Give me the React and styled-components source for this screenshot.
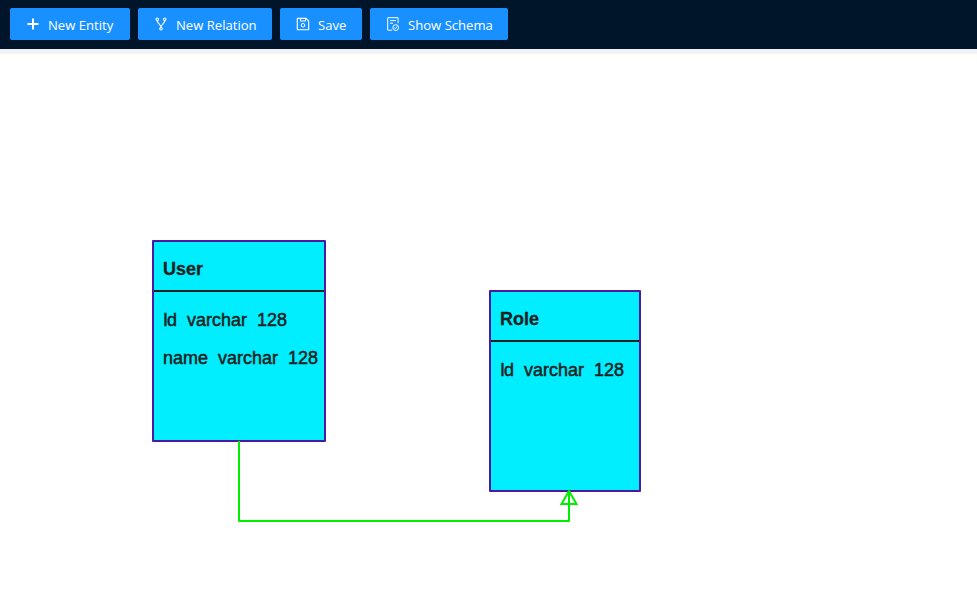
import React from "react";
import styled, { createGlobalStyle } from "styled-components";
import { AiOutlineFork, AiOutlineSave } from "react-icons/ai";

const GlobalStyle = createGlobalStyle`
  body {
    margin: 0;
    background: #ffffff;
    overflow: hidden;
  }
`;

const Page = styled.div`
  display: flex;
  flex-direction: column;
  height: 600px;
`;

const Toolbar = styled.header`
  display: flex;
  gap: 8px;
  box-sizing: border-box;
  height: 54px;
  padding: 8px 10px;
  background: #001529;
  border-bottom: 5px solid #f0f2f5;
`;

const ToolButton = styled.button`
  display: flex;
  align-items: center;
  gap: 7px;
  box-sizing: border-box;
  width: ${(p) => p.$width}px;
  height: 32px;
  padding: 0 0 0 15px;
  border: 0;
  border-radius: 2px;
  background: #1890ff;
  color: #ffffff;
  font: 13.1px/22px "Open Sans", sans-serif;
  white-space: nowrap;

  svg {
    flex: none;
    width: 16px;
    height: 16px;
  }
`;

const ButtonLabel = styled.span`
  padding-top: 2px;
`;

const Canvas = styled.main`
  position: relative;
  flex: 1;
  background: #ffffff;
`;

const Entity = styled.section`
  position: absolute;
  left: ${(p) => p.$x}px;
  top: ${(p) => p.$y}px;
  box-sizing: border-box;
  width: ${(p) => p.$width}px;
  height: 202px;
  border: 2px solid #4b1a9e;
  border-radius: 1px;
  background: #00eeff;
  color: #222222;
  font-family: "Liberation Sans", Arial, sans-serif;
  font-size: 18px;
  white-space: pre;
`;

const EntityName = styled.h2`
  box-sizing: border-box;
  height: 50px;
  margin: 0;
  padding: 6px 9px 0;
  border-bottom: 2px solid #222222;
  font-size: 18px;
  line-height: 43px;
  -webkit-text-stroke: 0.3px #222222;
`;

const FieldRow = styled.div`
  height: 38px;
  padding: 0 9px;
  line-height: 38px;
  -webkit-text-stroke: 0.5px #222222;

  &:first-child::first-letter {
    letter-spacing: -1px;
  }
`;

const FieldList = styled.div`
  padding-top: 9px;
`;

const RelationLayer = styled.svg`
  position: absolute;
  left: 0;
  top: 0;
`;

function PlusIcon() {
  return (
    <svg viewBox="0 0 16 16" fill="none" stroke="currentColor" strokeWidth="2">
      <path d="M8 2.5V13.5M2.5 8H13.5" />
    </svg>
  );
}

function SchemaIcon() {
  return (
    <svg viewBox="0 0 16 16" fill="none" stroke="currentColor">
      <path d="M13.1 7.2V1.7H2.7V14.2H7M5 4.6H11M5 7.2H8" />
      <circle cx="10.7" cy="11.6" r="2.9" />
      <path d="M9.4 11.6L10.4 12.7L12.2 10.4" />
    </svg>
  );
}

const actions = [
  { label: "New Entity", Icon: PlusIcon, width: 120 },
  { label: "New Relation", Icon: AiOutlineFork, width: 134 },
  { label: "Save", Icon: AiOutlineSave, width: 82 },
  { label: "Show Schema", Icon: SchemaIcon, width: 138 },
];

const entities = [
  { name: "User", x: 152, y: 186, width: 174, fields: ["Id  varchar  128", "name  varchar  128"] },
  { name: "Role", x: 489, y: 236, width: 152, fields: ["Id  varchar  128"] },
];

export default function App() {
  return (
    <Page>
      <GlobalStyle />
      <Toolbar>
        {actions.map(({ label, Icon, width }) => (
          <ToolButton key={label} $width={width}>
            <Icon />
            <ButtonLabel>{label}</ButtonLabel>
          </ToolButton>
        ))}
      </Toolbar>
      <Canvas>
        {entities.map((e) => (
          <Entity key={e.name} $x={e.x} $y={e.y} $width={e.width}>
            <EntityName>{e.name}</EntityName>
            <FieldList>
              {e.fields.map((f) => (
                <FieldRow key={f}>{f}</FieldRow>
              ))}
            </FieldList>
          </Entity>
        ))}
        <RelationLayer width="977" height="546" fill="none" stroke="#00ee00" strokeWidth="2">
          <path d="M239 387V467H569V437" strokeLinejoin="round" />
          <path d="M569 437L576.5 450H561.5Z" />
        </RelationLayer>
      </Canvas>
    </Page>
  );
}
